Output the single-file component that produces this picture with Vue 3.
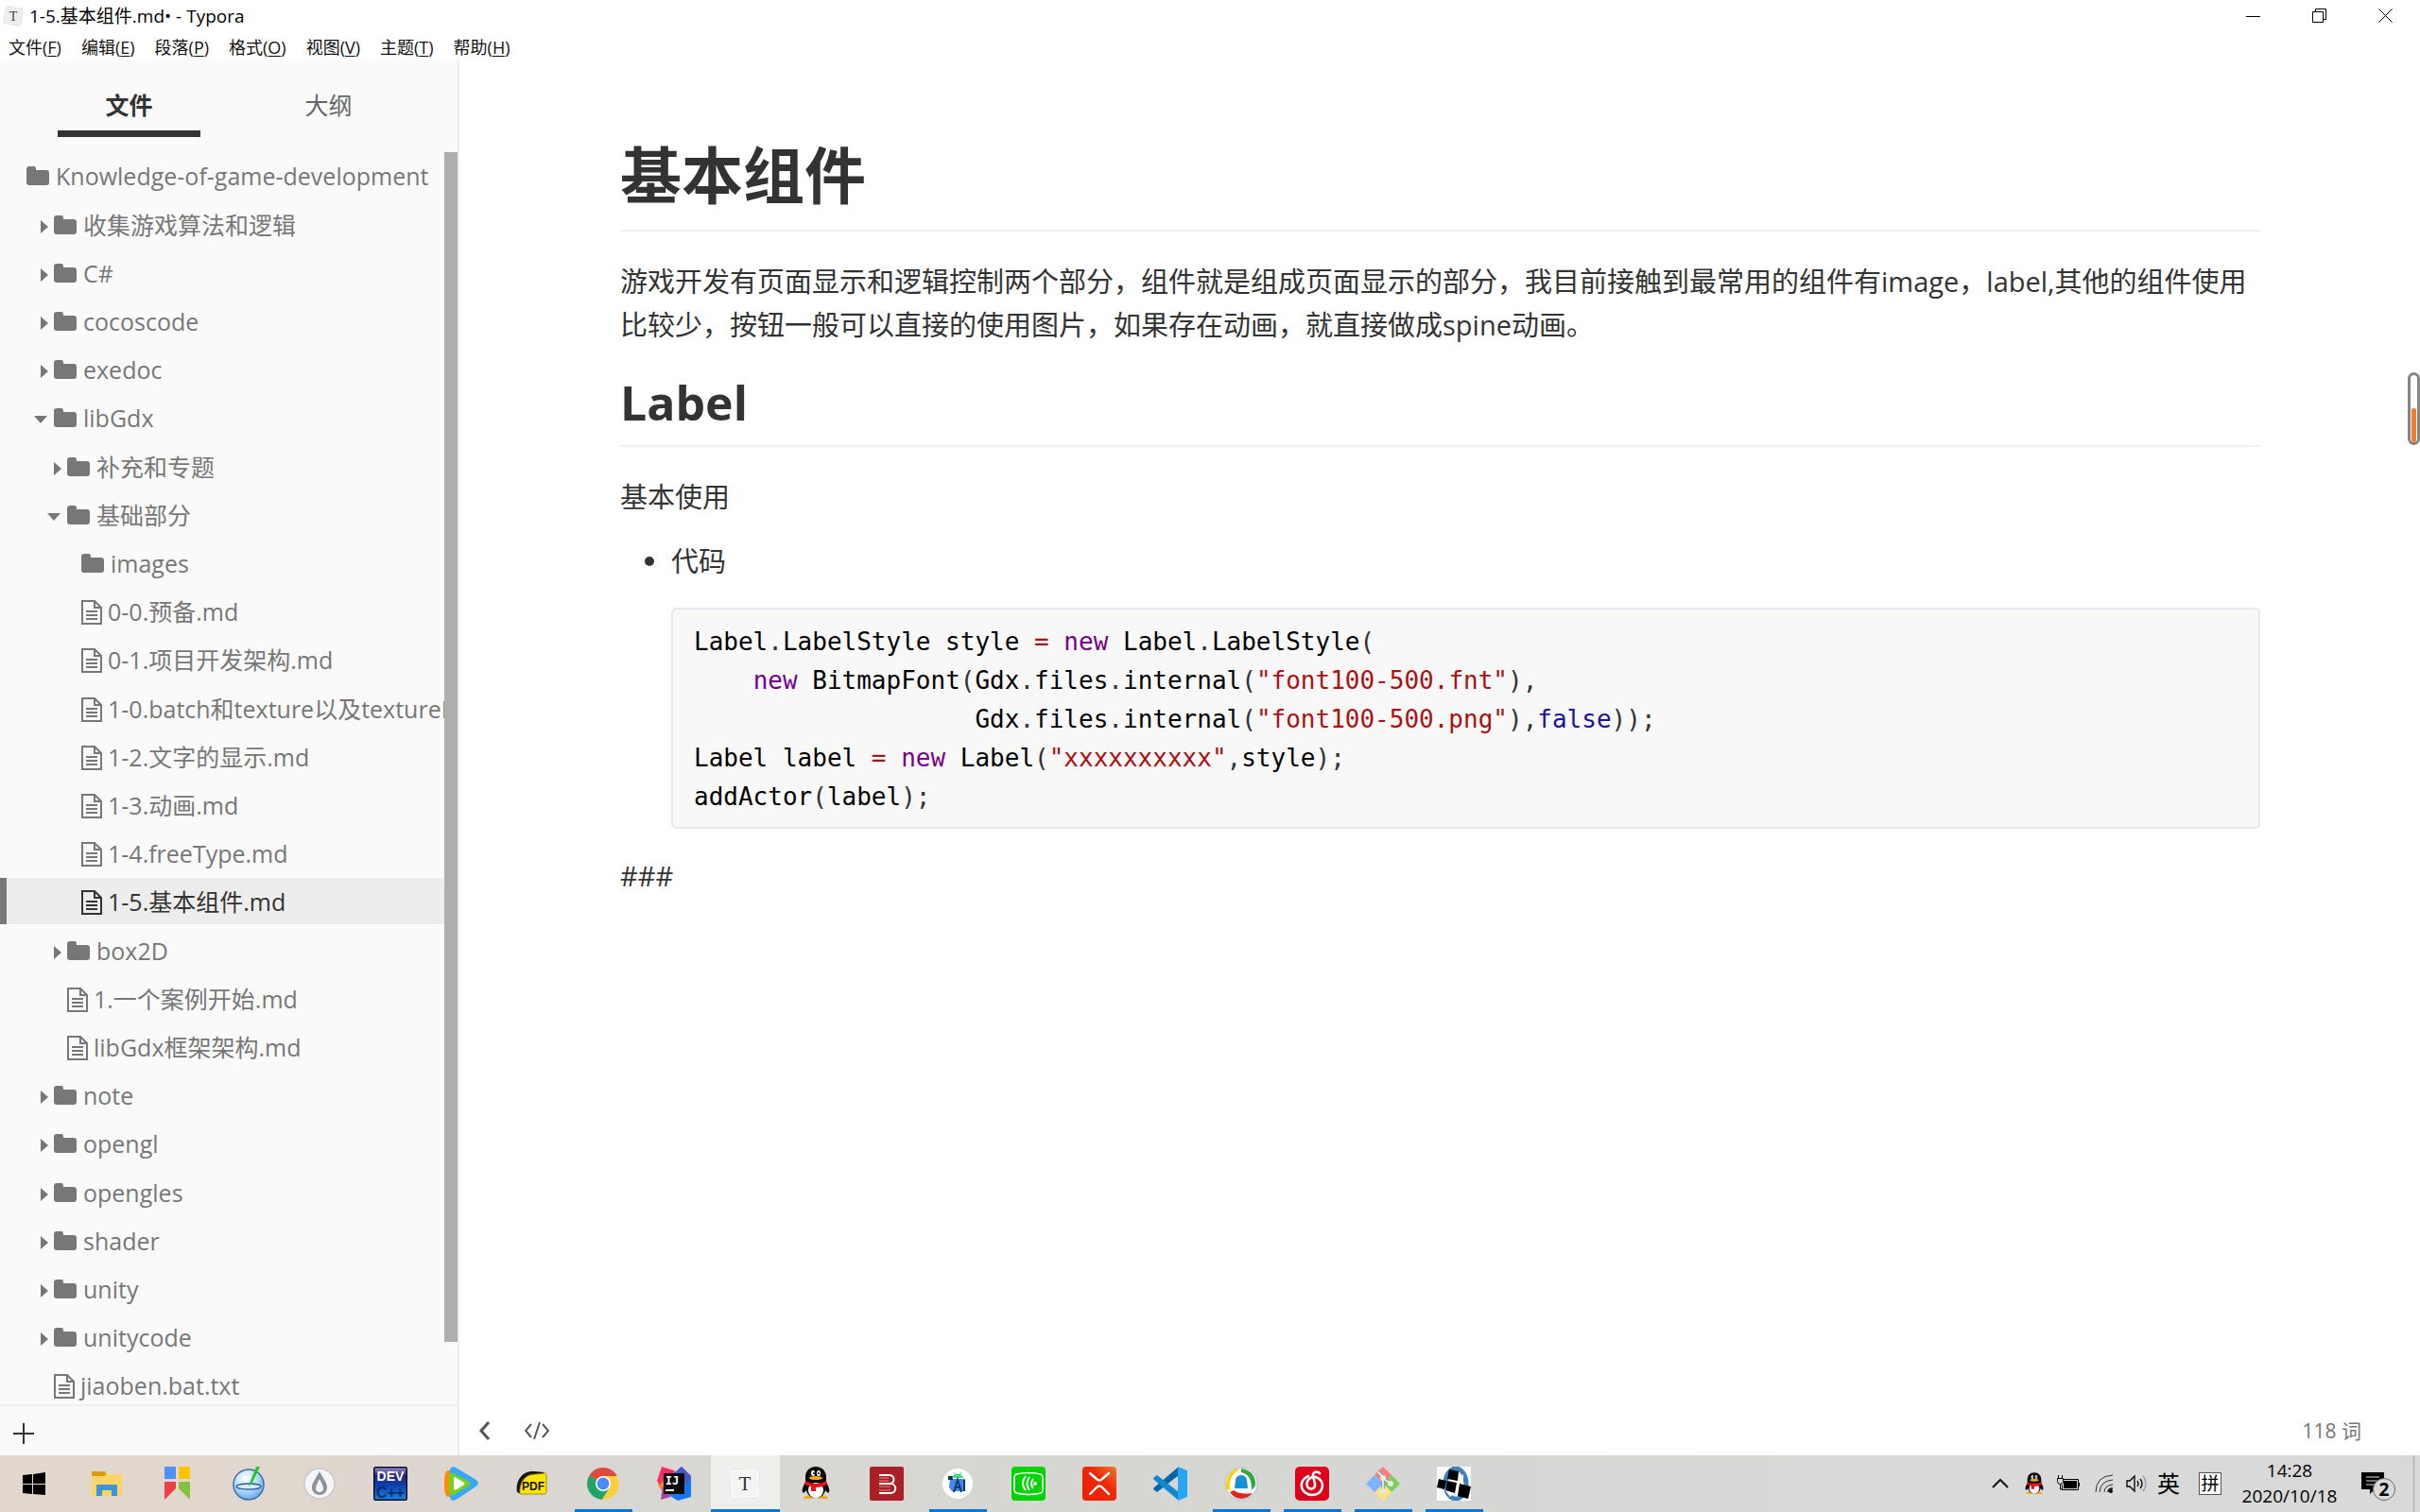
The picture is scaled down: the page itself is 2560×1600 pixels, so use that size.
<script setup>
const menus = [
  ['文件', 'F'], ['编辑', 'E'], ['段落', 'P'], ['格式', 'O'],
  ['视图', 'V'], ['主题', 'T'], ['帮助', 'H'],
]

const tree = [
  { name: 'Knowledge-of-game-development', level: 0, kind: 'folder' },
  { name: '收集游戏算法和逻辑', level: 1, kind: 'folder', state: 'closed' },
  { name: 'C#', level: 1, kind: 'folder', state: 'closed' },
  { name: 'cocoscode', level: 1, kind: 'folder', state: 'closed' },
  { name: 'exedoc', level: 1, kind: 'folder', state: 'closed' },
  { name: 'libGdx', level: 1, kind: 'folder', state: 'open' },
  { name: '补充和专题', level: 2, kind: 'folder', state: 'closed' },
  { name: '基础部分', level: 2, kind: 'folder', state: 'open' },
  { name: 'images', level: 3, kind: 'folder' },
  { name: '0-0.预备.md', level: 3, kind: 'file' },
  { name: '0-1.项目开发架构.md', level: 3, kind: 'file' },
  { name: '1-0.batch和texture以及textureRegion.md', level: 3, kind: 'file' },
  { name: '1-2.文字的显示.md', level: 3, kind: 'file' },
  { name: '1-3.动画.md', level: 3, kind: 'file' },
  { name: '1-4.freeType.md', level: 3, kind: 'file' },
  { name: '1-5.基本组件.md', level: 3, kind: 'file', active: true },
  { name: 'box2D', level: 2, kind: 'folder', state: 'closed' },
  { name: '1.一个案例开始.md', level: 2, kind: 'file' },
  { name: 'libGdx框架架构.md', level: 2, kind: 'file' },
  { name: 'note', level: 1, kind: 'folder', state: 'closed' },
  { name: 'opengl', level: 1, kind: 'folder', state: 'closed' },
  { name: 'opengles', level: 1, kind: 'folder', state: 'closed' },
  { name: 'shader', level: 1, kind: 'folder', state: 'closed' },
  { name: 'unity', level: 1, kind: 'folder', state: 'closed' },
  { name: 'unitycode', level: 1, kind: 'folder', state: 'closed' },
  { name: 'jiaoben.bat.txt', level: 1, kind: 'file' },
]

// Each code line is a list of [token class, text] pairs.
const code = [
  [['v', 'Label'], ['p', '.'], ['v', 'LabelStyle style '], ['o', '='], ['p', ' '], ['k', 'new'], ['v', ' Label'], ['p', '.'], ['v', 'LabelStyle'], ['p', '(']],
  [['p', '    '], ['k', 'new'], ['v', ' BitmapFont'], ['p', '('], ['v', 'Gdx'], ['p', '.'], ['v', 'files'], ['p', '.'], ['v', 'internal'], ['p', '('], ['s', '"font100-500.fnt"'], ['p', '),']],
  [['p', '                   '], ['v', 'Gdx'], ['p', '.'], ['v', 'files'], ['p', '.'], ['v', 'internal'], ['p', '('], ['s', '"font100-500.png"'], ['p', '),'], ['a', 'false'], ['p', '));']],
  [['v', 'Label label '], ['o', '='], ['p', ' '], ['k', 'new'], ['v', ' Label'], ['p', '('], ['s', '"xxxxxxxxxx"'], ['p', ','], ['v', 'style'], ['p', ');']],
  [['v', 'addActor'], ['p', '('], ['v', 'label'], ['p', ');']],
]

const penguin = `
  <path d="M8 31l6-2 1 5H6c-2 0-1-2 2-3zM28 31l-6-2-1 5h9c2 0 1-2-2-3z" fill="#f9a61a"/>
  <path d="M18 0c-7 0-11 5-11 11v5c-2 4-4 8-3 11 1 2 3-1 4-2 1 5 5 8 10 8s9-3 10-8c1 1 3 4 4 2 1-3-1-7-3-11v-5c0-6-4-11-11-11z" fill="#0a0a0a"/>
  <ellipse cx="18" cy="25" rx="8" ry="8" fill="#fff"/>
  <path d="M7 15c6 4 16 4 22 0l1 4c-4 2-8 3-12 3v4h-5v-5l-7-2z" fill="#e8121c"/>
  <ellipse cx="15" cy="7" rx="2" ry="3" fill="#fff"/><ellipse cx="21" cy="7" rx="2" ry="3" fill="#fff"/>
  <circle cx="16" cy="7" r="1" fill="#000"/><circle cx="21" cy="7" r="1" fill="#000"/>
  <ellipse cx="18" cy="12" rx="7" ry="2" fill="#fba81c"/>`

const apps = [
  { name: '开始', art: `<path d="M4 9l10-1v10H4zM15 8l13-2v12H15zM4 19h10v10L4 28zM15 19h13v11l-13-1z" fill="#000"/>` },
  { name: '文件资源管理器', art: `
    <path d="M2 6q0-1 1-1h13l2 4-2 2H2z" fill="#dd9a0b"/>
    <path d="M2 10h13l3-2h15q1 0 1 1v21q0 1-1 1H3q-1 0-1-1z" fill="#ffd466"/>
    <path d="M7 31V20q0-1 1-1h20q1 0 1 1v11h-6v-5q0-1-1-1h-8q-1 0-1 1v5z" fill="#3d95d8"/>` },
  { name: '书签', art: `
    <path d="M4 0h12v13H4z" fill="#4f8ffc"/><path d="M19 0h12v13H19z" fill="#ffc400"/>
    <path d="M4 16h12v7L4 35z" fill="#ea4141"/><path d="M19 16h12v19L19 23z" fill="#83c23f"/>` },
  { name: '画笔', art: `
    <defs><radialGradient id="ball" cx=".4" cy=".3" r=".8"><stop offset="0" stop-color="#fff"/><stop offset=".5" stop-color="#b4dcfb"/><stop offset="1" stop-color="#4f9be6"/></radialGradient></defs>
    <circle cx="18" cy="19" r="16" fill="url(#ball)" stroke="#3a6ea8" stroke-width="1.5"/>
    <ellipse cx="18" cy="21" rx="13" ry="3" fill="#d5edff" stroke="#2b5f96" stroke-width="1.4"/>
    <path d="M26 0h4L22 17l-4 4 2-6z" fill="#25c52b"/>` },
  { name: '水滴', art: `
    <circle cx="18" cy="18" r="16" fill="#f4f5f6" stroke="#c6c8cb" stroke-width="1.5"/>
    <path d="M18 5c-4 8-8 12-8 17 0 4 3 8 8 8s8-4 8-8c0-5-4-9-8-17zm0 8c2 4 4 7 4 10s-2 4-4 4-4-1-4-4 2-6 4-10z" fill="#8b929a"/>` },
  { name: 'Dev-C++', art: `
    <defs><linearGradient id="dev" x1="0" y1="0" x2="0" y2="1"><stop offset="0" stop-color="#9a94d4"/><stop offset=".25" stop-color="#27257e"/><stop offset=".55" stop-color="#0d3fae"/><stop offset="1" stop-color="#1488ec"/></linearGradient></defs>
    <rect x=".7" y=".7" width="34.6" height="34.6" rx="1.5" fill="url(#dev)" stroke="#0b0b1c" stroke-width="1.4"/>
    <text x="18" y="15" text-anchor="middle" font-family="Liberation Sans, sans-serif" font-weight="700" font-size="14" fill="#fff">DEV</text>
    <text x="18" y="33" text-anchor="middle" font-family="Liberation Sans, sans-serif" font-weight="700" font-size="16" fill="#062a66">C++</text>` },
  { name: '腾讯视频', art: `
    <path d="M7 4c-5-1-7 2-7 14s2 16 7 13z" fill="#ff8a0c"/>
    <path d="M6 5c0-5 3-6 8-3l18 11c5 3 5 6 0 9L14 34c-5 3-8 2-8-3z" fill="#38a7f5"/>
    <path d="M5 11c0-4 2-5 6-3l14 7c3 2 3 4 0 6l-14 8c-4 2-6 1-6-3z" fill="#79cf1d"/>
    <path d="M10 13c0-2 1-2 3-1l8 5q1 1 0 2l-8 5c-2 1-3 1-3-1z" fill="#fff"/>` },
  { name: 'PDF 阅读器', art: `
    <path d="M2 27C0 14 8 4 20 5l11 1-4 3C14 8 7 14 6 29z" fill="#161616"/>
    <path d="M5 29c-1-12 5-21 16-21l11-1q1 0 1 2v18q0 2-2 2z" fill="#ffe500" stroke="#8a7c10" stroke-width=".8"/>
    <text x="19" y="25" text-anchor="middle" font-family="Liberation Sans, sans-serif" font-weight="700" font-size="12" fill="#111">PDF</text>` },
  { name: 'Chrome', running: true, art: `
    <path d="M18 18L3.300 9.500A17 17 0 0 1 32.700 9.500z" fill="#dd4b3e"/>
    <path d="M18 18L3.300 9.500A17 17 0 0 0 17 35l8-13z" fill="#1fa463"/>
    <path d="M18 18l7 4-8 13A17 17 0 0 0 32.700 10H18z" fill="#fdd03b"/>
    <circle cx="18" cy="18" r="8" fill="#fff"/><circle cx="18" cy="18" r="6.400" fill="#4a8af4"/>` },
  { name: 'IntelliJ IDEA', art: `
    <path d="M5 0l13 4 8 12-12 12-9-4L0 15z" fill="#fc2f63"/>
    <path d="M1 20l8-6 6 12-8 2z" fill="#f58529"/><path d="M4 35l2-14h14l-6 11z" fill="#a4479c"/>
    <path d="M18 7l8-7 10 10v22l-14 4-8-5z" fill="#1279f5"/><path d="M18 7l8-7 10 10-4 10z" fill="#4b57c4"/>
    <rect x="7" y="7" width="22" height="22" fill="#090909"/>
    <text x="16" y="19" text-anchor="middle" font-family="DejaVu Sans Mono, monospace" font-weight="700" font-size="12" fill="#fff">IJ</text>
    <path d="M9 24h9v2H9z" fill="#fff"/>` },
  { name: 'Typora', running: true, active: true, art: `
    <rect x="4" y="4" width="28" height="28" rx="3" transform="rotate(8 18 18)" fill="#f7f7f7" stroke="#d5d5d5" stroke-width=".8"/>
    <rect x="4" y="4" width="28" height="28" rx="3" fill="#f4f4f4" stroke="#fff"/>
    <text x="18" y="25" text-anchor="middle" font-family="Liberation Serif, serif" font-size="21" fill="#333">T</text>` },
  { name: 'QQ', art: penguin },
  { name: '词典', art: `
    <rect width="36" height="36" rx="2" fill="#a92127"/>
    <path d="M10 9h11c6 0 6 9 0 9H10M10 18h12c7 0 7 10 0 10H10" fill="none" stroke="#fff" stroke-width="2"/>
    <path d="M10 12h10M10 15h10M10 21h12M10 25h12" stroke="#d78d90"/>` },
  { name: 'Android Studio', running: true, art: `
    <circle cx="18" cy="18" r="16" fill="#fff"/>
    <path d="M10 13h16v13H12l-3-4z" fill="#4285f4"/><path d="M8 10h5v4H8z" fill="#17344d"/>
    <path d="M12 12c1-6 11-6 12 0z" fill="#3ddc84"/><path d="M14 6l2 3M22 6l-2 3" stroke="#3ddc84"/>
    <path d="M14 27l4-13 4 13M15 22h6M25 14v12" fill="none" stroke="#12395e" stroke-width="2"/>` },
  { name: '爱奇艺', art: `
    <rect width="36" height="36" rx="4" fill="#00d400"/>
    <path d="M5 8q13-3 26 0M5 28q13 3 26 0M3 12v12M33 12v12M3 12q0-4 3-4M33 12q0-4-3-4M3 24q0 4 3 4M33 24q0 4-3 4" fill="none" stroke="#fff" stroke-width="1.6"/>
    <circle cx="25" cy="18" r="2" fill="#fff"/>
    <path d="M23 13q-4 5 0 10M19 11q-5 7 0 14M15 10q-6 8 0 15" fill="none" stroke="#fff" stroke-width="2"/>` },
  { name: 'XMind', art: `
    <defs><linearGradient id="xm" x1="1" y1="0" x2="0" y2="1"><stop offset="0" stop-color="#ea7a2c"/><stop offset=".4" stop-color="#ee2a0a"/><stop offset="1" stop-color="#ee1c00"/></linearGradient></defs>
    <rect width="36" height="36" rx="4" fill="url(#xm)"/>
    <path d="M8 7l7 6q3 3 6 0l7-6M8 29l7-7q3-3 6 0l7 7" fill="none" stroke="#fff" stroke-width="2.400" stroke-linecap="round"/>` },
  { name: 'VS Code', art: `
    <path d="M0 24l4 3L27 9V0L1 22q-1 1-1 2z" fill="#0065a9"/>
    <path d="M0 12l4-3 23 18v9L1 14q-1-1-1-2z" fill="#1088d0"/>
    <path d="M26 0l10 4v28l-10 4z" fill="#27a7f2"/>` },
  { name: 'QQ 浏览器', running: true, art: `
    <circle cx="18" cy="18" r="17" fill="#fff" stroke="#a9bccb"/>
    <path d="M14 2C5 5 1 12 2 24l5 1C4 15 8 8 16 3z" fill="#fbd315"/>
    <path d="M18 2c9 1 16 7 15 18l-4 5C29 15 27 8 18 6z" fill="#35a83b"/>
    <path d="M6 27c6 9 18 9 24 1-8 1-14 1-20-3z" fill="#dd2a20"/>
    <path d="M18 9c-4 0-6 3-6 6l-1 7q1 2 3 1h8q2 1 3-1l-1-7c0-3-2-6-6-6z" fill="#1592d6"/>` },
  { name: '网易云音乐', running: true, art: `
    <rect width="36" height="36" rx="5" fill="#dd001b"/>
    <path d="M14 10C2 15 6 30 18 30c11 0 15-13 6-18-8-4-13 4-11 9 2 4 9 3 8-3l-2-8c-1-4 4-6 7-3" fill="none" stroke="#fff" stroke-width="2.600" stroke-linecap="round"/>` },
  { name: 'Git', running: true, art: `
    <path d="M18 0l9 9-9 9-9-9z" fill="#f98080"/><path d="M27 9l9 9-9 9-9-9z" fill="#7fd05a"/>
    <path d="M18 18l9 9-9 9-9-9z" fill="#fde577"/><path d="M9 9l9 9-9 9-9-9z" fill="#80b3ff"/>
    <path d="M12 5l6 6v15M18 12l8 6" fill="none" stroke="#999" stroke-width="4"/>
    <path d="M12 5l6 6v15M18 12l8 6" fill="none" stroke="#e4e4e4" stroke-width="2"/>
    <circle cx="18" cy="12" r="3" fill="#e8e8e8"/><circle cx="18" cy="26" r="3" fill="#e8e8e8"/><circle cx="26" cy="18" r="3" fill="#e8e8e8"/>` },
  { name: 'libGDX', running: true, art: `
    <path d="M0 0h36v36H0z" fill="#fff"/>
    <ellipse cx="20" cy="18" rx="11" ry="16" fill="none" stroke="#3f7fbd" stroke-width="5"/>
    <path d="M8 24L28 8v12l-14 12z" fill="#fff"/>
    <path d="M13 3l10 2-1 10-11-2zM2 13l8 2-2 9-8-2zM11 15l10 2-2 11-10-3zM24 18l12 3-3 13-11-3z" fill="#000"/>` },
]
</script>

<template>
  <div class="desktop">
    <header class="titlebar">
      <svg class="app-icon" viewBox="0 0 22 22" aria-hidden="true">
        <rect x="2" y="2" width="18" height="18" rx="2" transform="rotate(8 11 11)" fill="#f7f7f7" stroke="#ddd" />
        <rect x="2" y="2" width="17" height="18" rx="2" fill="#eee" />
        <text x="11" y="16" text-anchor="middle" font-family="Liberation Serif, serif" font-size="14" fill="#444">T</text>
      </svg>
      <span class="title">1-5.基本组件.md• - Typora</span>
      <div class="window-controls">
        <button type="button" aria-label="最小化"><svg viewBox="0 0 16 16"><path d="M0 8.500h15" /></svg></button>
        <button type="button" aria-label="还原"><svg viewBox="0 0 16 16"><path d="M.5 3.500h11v11H.5zM3.500 3.500v-3h11v11h-3" /></svg></button>
        <button type="button" aria-label="关闭"><svg viewBox="0 0 16 16"><path d="M.5.5l14 14M14.500.5l-14 14" /></svg></button>
      </div>
    </header>

    <nav class="menubar">
      <button v-for="[label, key] in menus" :key="key" type="button">{{ label }}(<u>{{ key }}</u>)</button>
    </nav>

    <div class="workspace">
      <aside class="sidebar">
        <div class="tabs" role="tablist">
          <button type="button" role="tab" aria-selected="true" class="tab current"><span>文件</span></button>
          <button type="button" role="tab" aria-selected="false" class="tab"><span>大纲</span></button>
        </div>
        <div class="tree-area">
          <ul class="tree">
            <li v-for="item in tree" :key="item.name" :class="{ active: item.active }">
              <button type="button" :class="'level-' + item.level">
                <span class="twisty">
                  <svg v-if="item.state === 'closed'" viewBox="0 0 21 14"><path d="M7 0l8 7-8 7z" /></svg>
                  <svg v-if="item.state === 'open'" viewBox="0 0 21 14"><path d="M0 3h14l-7 8z" /></svg>
                </span>
                <svg v-if="item.kind === 'folder'" class="folder" viewBox="0 0 24 20">
                  <path d="M0 3q0-3 3-3h5q2 0 2 3v1h11q3 0 3 3v10q0 3-3 3H3q-3 0-3-3z" />
                </svg>
                <svg v-else class="file" viewBox="0 0 22 26">
                  <path d="M1 1h13l7 7v17H1zM14 1v7h7M5 12h12M5 16h12M5 20h12" />
                </svg>
                <span class="name">{{ item.name }}</span>
              </button>
            </li>
          </ul>
          <div class="scroll-track"><div class="scroll-thumb"></div></div>
        </div>
        <div class="sidebar-footer">
          <button type="button" aria-label="新建文件"><svg viewBox="0 0 22 22"><path d="M11 0v22M0 11h22" /></svg></button>
        </div>
      </aside>

      <main class="editor">
        <article class="write">
          <h1>基本组件</h1>
          <p>游戏开发有页面显示和逻辑控制两个部分，组件就是组成页面显示的部分，我目前接触到最常用的组件有image，label,其他的组件使用比较少，按钮一般可以直接的使用图片，如果存在动画，就直接做成spine动画。</p>
          <h2>Label</h2>
          <p>基本使用</p>
          <ul class="list">
            <li>
              <p>代码</p>
              <pre><code><span v-for="(line, i) in code" :key="i" class="line"><span v-for="([type, text], j) in line" :key="j" :class="'tok-' + type">{{ text }}</span></span></code></pre>
            </li>
          </ul>
          <p class="after-list">###</p>
        </article>
        <footer class="statusbar">
          <button type="button" aria-label="隐藏侧边栏"><svg class="back" viewBox="0 0 12 20"><path d="M10 1L2 10l8 9" /></svg></button>
          <button type="button" aria-label="源代码模式"><svg class="source" viewBox="0 0 26 20"><path d="M7 3L1 10l6 7M19 3l6 7-6 7M16 1l-6 18" /></svg></button>
          <span class="count">118 词</span>
        </footer>
        <div class="edge-pill"><div></div></div>
      </main>
    </div>

    <footer class="taskbar">
      <div class="apps">
        <button v-for="app in apps" :key="app.name" type="button" :aria-label="app.name" :class="{ running: app.running, focused: app.active }">
          <svg viewBox="0 0 37 36" v-html="app.art"></svg>
        </button>
      </div>
      <div class="tray">
        <svg class="chevron" viewBox="0 0 18 12"><path d="M1 10l8-8 8 8" /></svg>
        <svg class="qq" viewBox="3 0 30 35" v-html="penguin"></svg>
        <svg class="battery" viewBox="0 0 24 20">
          <path d="M5 5.500h17.500v11H5.500v-5" fill="none" stroke="#000" />
          <path d="M7 7h14v8H7zM23 9h1v4h-1z" />
          <path d="M.5 4.500h6v3q0 3-3 3-3 0-3-3z" fill="#dadada" stroke="#000" />
          <path d="M1.500 1v3M5.500 1v3M3.500 10v6h2" fill="none" stroke="#000" />
        </svg>
        <svg class="wifi" viewBox="0 0 20 20">
          <path d="M1 19Q1 2 19 1M5 19Q6 7 19 6M10 19Q10 12 19 11" fill="none" stroke="#333" />
          <path d="M14 19q0-4 5-4" fill="none" stroke="#111" stroke-width="1.500" /><circle cx="17" cy="18" r="2" />
        </svg>
        <svg class="speaker" viewBox="0 0 22 20">
          <path d="M1 7h3l5-5v16l-5-5H1zM12 7q2 3 0 6M15 5q4 5 0 10" fill="none" stroke="#000" stroke-width="1.300" />
          <path d="M18 2q6 8 0 16" fill="none" stroke="#999" stroke-width="1.300" />
        </svg>
        <span class="ime">英</span>
        <span class="pinyin">拼</span>
        <time class="clock" datetime="2020-10-18T14:28"><span>14:28</span><span>2020/10/18</span></time>
        <button type="button" class="notices" aria-label="通知">
          <svg viewBox="0 0 24 24"><path d="M0 0h24v18H14l-5 5v-5H0z" /><path d="M5 5h14M5 9h14M5 13h9" stroke="#ddd" /></svg>
          <span class="badge">2</span>
        </button>
        <div class="show-desktop"></div>
      </div>
    </footer>
  </div>
</template>

<style>
body {
  margin: 0;
}
</style>

<style scoped>
.desktop {
  display: flex;
  flex-direction: column;
  height: 100vh;
  overflow: hidden;
  background: #fff;
  color: #333;
  font-family: "Open Sans", "Noto Sans CJK SC", sans-serif;
}

button {
  margin: 0;
  padding: 0;
  border: 0;
  background: none;
  color: inherit;
  font: inherit;
}

svg {
  display: block;
  flex: none;
}

ul {
  margin: 0;
  padding: 0;
  list-style: none;
}

/* window frame */
.titlebar {
  display: flex;
  align-items: center;
  flex: none;
  height: 34px;
  padding-left: 3px;
  color: #000;
  font-size: 19px;
  line-height: 24px;
}

.app-icon {
  width: 22px;
  height: 22px;
}

.title {
  margin-left: 6px;
}

.window-controls {
  display: flex;
  margin-left: auto;
}

.window-controls button {
  width: 70px;
  height: 34px;
  padding-left: 26px;
}

.window-controls svg {
  width: 16px;
  height: 16px;
  fill: none;
  stroke: #000;
}

.menubar {
  display: flex;
  flex: none;
  gap: 21px;
  height: 30px;
  padding-left: 9px;
  color: #111;
  font-size: 18px;
  line-height: 32px;
}

.menubar u {
  text-underline-offset: 2px;
}

.workspace {
  display: flex;
  flex: 1;
  min-height: 0;
}

/* file sidebar */
.sidebar {
  display: flex;
  flex-direction: column;
  flex: none;
  width: 484px;
  border-right: 2px solid #eee;
  background: #fafafa;
  color: #777;
  font-size: 25px;
}

.tabs {
  display: flex;
  flex: none;
  height: 81px;
  margin-bottom: 16px;
  padding: 0 31px;
}

.tab {
  display: flex;
  flex: 1;
  padding: 0 30px;
  color: #666;
  line-height: 94px;
}

.tab span {
  flex: 1;
  height: 74px;
}

.tab.current {
  color: #333;
  font-weight: 700;
}

.tab.current span {
  border-bottom: 7px solid #333;
}

.tree-area {
  display: flex;
  flex: 1;
  min-height: 0;
  overflow: hidden;
}

.tree {
  flex: 1;
  min-width: 0;
}

.tree li {
  height: 51px;
}

.tree li:nth-child(5n + 1) {
  height: 52px;
}

.tree button {
  display: flex;
  align-items: center;
  width: 100%;
  height: 49px;
  overflow: hidden;
  line-height: 49px;
  text-align: left;
  white-space: nowrap;
}

.tree .level-0 { padding-left: 7px; }
.tree .level-1 { padding-left: 36px; }
.tree .level-2 { padding-left: 50px; }
.tree .level-3 { padding-left: 65px; }

.tree .active button {
  background: #ededed;
  box-shadow: inset 7px 0 #777;
  color: #333;
}

.twisty {
  flex: none;
  width: 21px;
}

.twisty svg {
  width: 21px;
  height: 14px;
  margin-top: 4px;
  fill: #777;
}

.folder {
  width: 24px;
  height: 20px;
  fill: #777;
}

.file {
  width: 22px;
  height: 26px;
  margin-top: 2px;
  fill: none;
  stroke: currentColor;
  stroke-width: 2;
}

.name {
  margin-left: 7px;
  padding-top: 2px;
}

.file + .name {
  margin-left: 6px;
}

.scroll-track {
  flex: none;
  width: 14px;
}

.scroll-thumb {
  height: 95%;
  background: #aeaeae;
}

.sidebar-footer {
  flex: none;
  height: 52px;
  padding-left: 14px;
  border-top: 2px solid #eee;
}

.sidebar-footer button {
  margin-top: 18px;
}

.sidebar-footer svg {
  width: 22px;
  height: 22px;
  stroke: #333;
  stroke-width: 2;
}

/* document */
.editor {
  position: relative;
  display: flex;
  flex-direction: column;
  flex: 1;
  min-width: 0;
}

.write {
  flex: 1;
  min-height: 0;
  padding: 82px 169px 0 170px;
  font-size: 29px;
  line-height: 46px;
}

.write h1,
.write h2 {
  margin: 0;
  border-bottom: 2px solid #eee;
  font-weight: 700;
}

.write h1 {
  padding-bottom: 18px;
  font-size: 65px;
  line-height: 79px;
}

.write h2 {
  margin-top: 28px;
  padding-bottom: 14px;
  font-size: 50px;
  line-height: 62px;
}

.write p {
  margin: 30px 0 0;
}

.write .list {
  padding-left: 54px;
}

.write .list li {
  position: relative;
}

.write .list li::before {
  content: "";
  position: absolute;
  top: 18px;
  left: -28px;
  width: 10px;
  height: 10px;
  border-radius: 50%;
  background: #333;
}

.write .list p {
  margin-top: 22px;
}

.write .after-list {
  margin-top: 27px;
}

.write pre {
  margin: 26px 0 0;
  padding: 14px 22px 11px;
  border: 2px solid #e7eaed;
  border-radius: 5px;
  background: #f8f8f8;
  font-family: "DejaVu Sans Mono", monospace;
  font-size: 26px;
  line-height: 41px;
}

.write code {
  font: inherit;
}

.line {
  display: block;
}

.tok-v { color: #000; }
.tok-p { color: #333; }
.tok-o { color: #981a1a; }
.tok-k { color: #708; }
.tok-s { color: #a11; }
.tok-a { color: #219; }

.statusbar {
  display: flex;
  align-items: center;
  flex: none;
  gap: 36px;
  height: 52px;
  padding: 0 62px 0 21px;
  color: #777;
  font-size: 21px;
}

.statusbar svg {
  height: 20px;
  fill: none;
  stroke: #555;
}

.back {
  width: 12px;
  stroke-width: 3;
}

.source {
  width: 26px;
  stroke-width: 2;
}

.count {
  margin-left: auto;
  padding-bottom: 2px;
}

.edge-pill {
  position: absolute;
  top: 330px;
  right: 0;
  display: flex;
  align-items: flex-end;
  justify-content: center;
  box-sizing: border-box;
  width: 13px;
  height: 77px;
  border: 3px solid #858585;
  border-radius: 7px;
}

.edge-pill div {
  width: 5px;
  height: 36px;
  border-radius: 2px;
  background: #f57b2a;
}

/* desktop taskbar */
.taskbar {
  display: flex;
  flex: none;
  height: 60px;
  background: linear-gradient(90deg, #e3d8cd 0, #dfd6ce 14%, #d8d7d3 26%, #d6d6d4 60%, #dadada 85%, #d8d8d8);
  color: #000;
}

.apps {
  display: flex;
  flex: 1;
  gap: 2px;
  padding-left: 2px;
}

.apps button {
  display: flex;
  align-items: center;
  justify-content: center;
  box-sizing: border-box;
  width: 73px;
  background: linear-gradient(#0078d7, #0078d7) center bottom / 0 3px no-repeat;
}

.apps .running {
  background-size: 61px 3px;
}

.apps .focused {
  background-color: #efefed;
  background-size: 100% 3px;
}

.apps svg {
  width: 37px;
  height: 36px;
}

.tray {
  display: flex;
  align-items: center;
}

.chevron {
  width: 18px;
  height: 12px;
  margin-right: 17px;
  fill: none;
  stroke: #111;
  stroke-width: 2;
}

.qq {
  width: 20px;
  height: 24px;
  margin-right: 14px;
}

.battery {
  width: 24px;
  height: 20px;
  margin-right: 16px;
}

.wifi {
  width: 20px;
  height: 20px;
  margin-right: 13px;
}

.speaker {
  width: 22px;
  height: 20px;
  margin-right: 11px;
}

.ime {
  margin-right: 20px;
  font-size: 24px;
  line-height: 32px;
}

.pinyin {
  width: 22px;
  height: 22px;
  margin-right: 19px;
  border: 1px solid #555;
  background: #fff;
  font-size: 19px;
  line-height: 22px;
  text-align: center;
}

.clock {
  display: flex;
  flex-direction: column;
  width: 106px;
  margin-right: 23px;
  font-size: 19px;
  line-height: 27px;
  text-align: center;
}

.notices {
  position: relative;
  width: 36px;
  height: 36px;
  margin-right: 19px;
}

.notices svg {
  width: 24px;
  height: 24px;
}

.badge {
  position: absolute;
  right: 0;
  bottom: 0;
  width: 22px;
  height: 22px;
  border: 1px solid #666;
  border-radius: 50%;
  background: #dadada;
  font-size: 19px;
  font-weight: 700;
  line-height: 22px;
}

.show-desktop {
  align-self: stretch;
  width: 6px;
  border-left: 1px solid #a5a5a5;
}
</style>
